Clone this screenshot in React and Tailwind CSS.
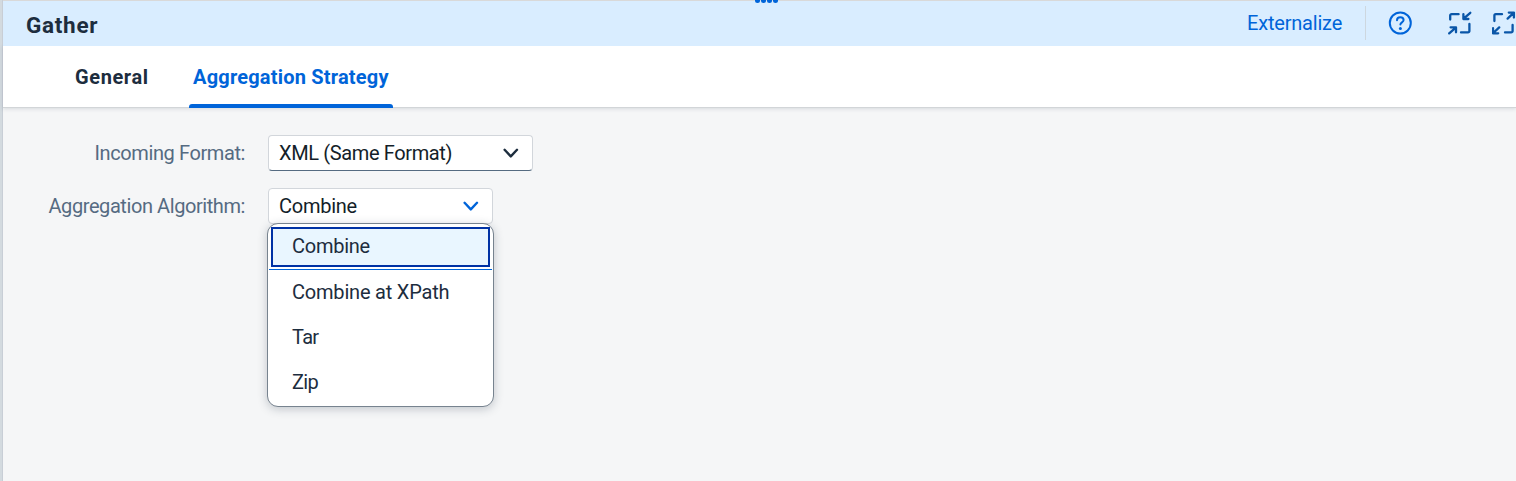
import React from "react";

const options = [
  { label: "Combine at XPath", spacing: "tracking-[-0.2px]" },
  { label: "Tar", spacing: "tracking-[-0.7px]" },
  { label: "Zip", spacing: "tracking-[-0.7px]" },
];

function Chevron({ className }) {
  return (
    <svg className={className} width="16" height="10" viewBox="0 0 16 10" fill="none" stroke="currentColor" strokeWidth="2.4" strokeLinecap="round" strokeLinejoin="round">
      <path d="M1.6 1.8 7.8 8.4 14 1.8" />
    </svg>
  );
}

function HelpIcon() {
  return (
    <svg className="shrink-0 text-[#0064d9]" width="24" height="24" viewBox="0 0 24 24" fill="none" stroke="currentColor" strokeWidth="2" strokeLinecap="round">
      <circle cx="12.3" cy="12" r="10.5" />
      <path d="M9 9.2C9 7.3 10.4 6.2 12.3 6.2s3.3 1.1 3.3 2.8c0 2.3-3.2 2.4-3.2 4.6" />
      <circle cx="12.4" cy="17.4" r="1.5" fill="currentColor" stroke="none" />
    </svg>
  );
}

function CollapseIcon() {
  return (
    <svg className="shrink-0 text-[#0a56a8]" width="24" height="24" viewBox="0 0 24 24" fill="none" stroke="currentColor" strokeWidth="2.3" strokeLinecap="round" strokeLinejoin="round">
      <path d="M2.2 8.6V4.6a1.4 1.4 0 0 1 1.4-1.4H10.6" />
      <path d="M21.4 13v7a1.4 1.4 0 0 1-1.4 1.4H13" />
      <path d="M22.3 1.8 15.6 7.6M15.4 3.2v4.8h5" />
      <path d="M1.2 22.4 7.8 16.6M2.6 16.3h5.4v5" />
    </svg>
  );
}

function ExpandIcon() {
  return (
    <svg className="shrink-0 text-[#0a56a8]" width="24" height="24" viewBox="0 0 24 24" fill="none" stroke="currentColor" strokeWidth="2.3" strokeLinecap="round" strokeLinejoin="round">
      <path d="M2.4 10V4.6a1.4 1.4 0 0 1 1.4-1.4H10" />
      <path d="M20.6 14v6a1.4 1.4 0 0 1-1.4 1.4H13" />
      <path d="M15.6 7.6 21.6 1.9M16.8 1.6h5.1v5" />
      <path d="M7.2 16.4 1.3 22M1 17.2v5.1h5.2" />
    </svg>
  );
}

export default function App() {
  return (
    <div className="flex h-[481px] w-[1516px] overflow-hidden bg-[#f5f6f7] font-['Roboto',sans-serif] text-[20px] leading-6 text-[#1d2d3e]">
      <div className="w-[3px] shrink-0 border-r border-[#c8ced6] bg-[#d3dadf]" />
      <div className="flex min-w-0 flex-1 flex-col">
        <header className="relative flex h-[46px] shrink-0 items-center border-t border-[#d9d9d9] bg-[#d9edff] pl-[23px]">
          <div className="absolute -top-[3px] left-[752px] flex gap-px">
            <span className="size-[5px] rounded-full bg-[#0064d9]" />
            <span className="size-[5px] rounded-full bg-[#0064d9]" />
            <span className="size-[5px] rounded-full bg-[#0064d9]" />
            <span className="size-[5px] rounded-full bg-[#0064d9]" />
          </div>
          <h1 className="pt-[2px] text-[22.5px] leading-6 font-bold tracking-[0.7px]">Gather</h1>
          <div className="ml-auto flex w-[272px] shrink-0 items-center pb-[2px]">
            <button className="w-[121px] shrink-0 pl-[3px] text-left tracking-[-0.2px] text-[#0064d9]">Externalize</button>
            <span className="h-[34px] w-px shrink-0 bg-[#cdd7df]" />
            <span className="ml-[22px] flex shrink-0"><HelpIcon /></span>
            <span className="ml-[36px] flex shrink-0"><CollapseIcon /></span>
            <span className="ml-[20px] flex shrink-0"><ExpandIcon /></span>
          </div>
        </header>
        <nav className="flex h-[62px] shrink-0 border-b border-[#d2d5d8] bg-white pl-[72px] font-bold shadow-[0_1px_4px_rgba(34,53,72,0.14)]">
          <div className="w-[114px] pt-[19px] tracking-[0.6px]">General</div>
          <div className="relative h-[62px] w-[204px] pt-[19px] pl-[4px] text-[#0064d9]">
            <span className="tracking-[0.2px] whitespace-nowrap">Aggregation Strategy</span>
            <span className="absolute bottom-0 left-0 h-1 w-full rounded-t-[3px] bg-[#0064d9]" />
          </div>
        </nav>
        <main className="flex flex-col gap-[17px] pt-[27px]">
          <div className="flex h-9 items-center">
            <label className="w-[242px] text-right tracking-[-0.4px] text-[#556b82]">Incoming Format:</label>
            <div className="ml-[23px] flex h-9 w-[265px] items-center justify-between rounded-[4px] border border-[#d2d6db] border-b-[#556b81] bg-white pr-[13px] pl-[10px] text-[#131e29]">
              <span className="tracking-[-0.37px]">XML (Same Format)</span>
              <Chevron className="text-[#1d2d3e]" />
            </div>
          </div>
          <div className="flex h-9 items-center">
            <label className="w-[242px] text-right tracking-[-0.42px] text-[#556b82]">Aggregation Algorithm:</label>
            <div className="relative ml-[23px] flex h-9 w-[225px] items-center justify-between rounded-[4px] border border-[#d2d6db] bg-white pr-[13px] pl-[10px] text-[#131e29]">
              <span className="tracking-[-0.25px]">Combine</span>
              <Chevron className="text-[#0064d9]" />
              <div className="absolute top-[34px] -left-[2px] h-[184px] w-[227px] rounded-[11px] border border-[#77838f] bg-white px-px pt-[3px] text-[#1d2d3e] shadow-[0_2px_10px_rgba(34,53,72,0.25)]">
                <div className="mx-[2px] flex h-10 items-center border-2 border-[#0032a5] bg-[#e9f6ff] pl-[19px]"><span className="-mt-[2px] tracking-[-0.25px]">Combine</span></div>
                <div className="mt-[2px] h-px bg-[#0064d9]" />
                <ul className="-mt-px">
                  {options.map(({ label, spacing }) => (
                    <li key={label} className="flex h-[45px] items-center pl-[23px]"><span className={spacing}>{label}</span></li>
                  ))}
                </ul>
              </div>
            </div>
          </div>
        </main>
      </div>
    </div>
  );
}
